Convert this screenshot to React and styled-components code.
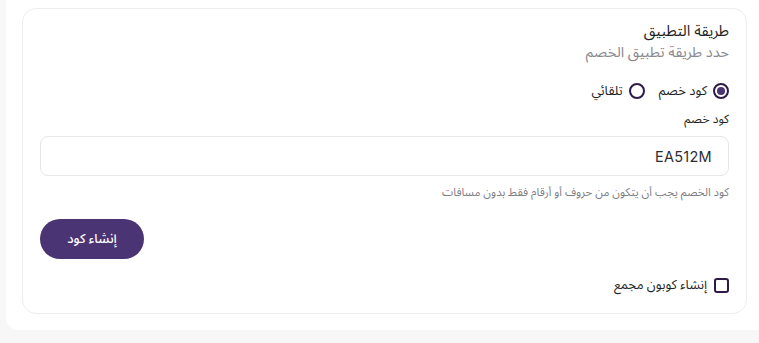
import React, { useState } from "react";
import styled, { createGlobalStyle } from "styled-components";

const GlobalStyle = createGlobalStyle`
  html, body {
    margin: 0;
    padding: 0;
    background: #f7f7f8;
  }
  body {
    font-family: "Noto Sans Arabic", "Noto Sans", "DejaVu Sans", sans-serif;
    overflow: hidden;
  }
`;

const Page = styled.div`
  width: 759px;
  height: 343px;
  padding: 0 0 13px 6px;
  box-sizing: border-box;
  display: flex;
  flex-direction: column;
`;

const OuterCard = styled.div`
  flex: 1;
  background: #ffffff;
  border-radius: 0 0 0 12px;
  padding: 8px 12px 16px 16px;
  display: flex;
  flex-direction: column;
`;

const Panel = styled.section`
  flex: 1;
  direction: rtl;
  background: #fff;
  border: 1px solid #ededee;
  border-radius: 14px;
  padding: 12px 17px 15px 17px;
  display: flex;
  flex-direction: column;
  align-items: stretch;
`;

const Title = styled.h3`
  margin: 0;
  font-size: 15px;
  line-height: 20px;
  font-weight: 400;
  color: #1f1f24;
`;

const Subtitle = styled.p`
  margin: 1px 0 0;
  font-size: 14.5px;
  line-height: 22px;
  font-weight: 400;
  color: #8a8a90;
`;

const RadioRow = styled.div`
  margin-top: 17px;
  display: flex;
  align-items: center;
  gap: 14px;
  height: 20px;
`;

const Option = styled.label`
  display: flex;
  align-items: center;
  gap: 6px;
  font-size: 13px;
  color: #1f1f24;
  cursor: pointer;
`;

const RadioCircle = styled.span`
  width: 16px;
  height: 16px;
  box-sizing: border-box;
  border: 2px solid #2c1a47;
  border-radius: 50%;
  display: flex;
  align-items: center;
  justify-content: center;

  &::after {
    content: "";
    width: 8px;
    height: 8px;
    border-radius: 50%;
    background: ${(p) => (p.$checked ? "#4b3474" : "transparent")};
  }
`;

const FieldLabel = styled.div`
  margin-top: 10px;
  font-size: 12px;
  line-height: 18px;
  color: #1f1f24;
`;

const Input = styled.input`
  margin-top: 7px;
  height: 40px;
  box-sizing: border-box;
  border: 1px solid #e6e6e8;
  border-radius: 8px;
  padding: 0 16px;
  font-family: "Inter", "Roboto", sans-serif;
  font-size: 14.5px;
  color: #2e2e33;
  letter-spacing: 0.02em;
  direction: rtl;
  outline: none;
  background: #fff;
`;

const Helper = styled.div`
  margin-top: 7px;
  font-size: 11.3px;
  line-height: 18px;
  color: #7d7d84;
`;

const ButtonRow = styled.div`
  margin-top: 18px;
  display: flex;
  justify-content: flex-end;
`;

const CreateButton = styled.button`
  width: 104px;
  height: 40px;
  border: none;
  border-radius: 20px;
  background: #4b3474;
  color: #fff;
  font-family: inherit;
  font-size: 13px;
  font-weight: 500;
  cursor: pointer;
`;

const CheckRow = styled.label`
  margin-top: 16px;
  display: flex;
  align-items: center;
  gap: 7px;
  height: 20px;
  font-size: 13px;
  color: #1f1f24;
  cursor: pointer;
`;

const CheckBox = styled.span`
  width: 15px;
  height: 15px;
  box-sizing: border-box;
  border: 2px solid #2c1a47;
  border-radius: 3px;
  background: ${(p) => (p.$checked ? "#4b3474" : "#fff")};
`;

const App = () => {
  const [mode, setMode] = useState("code");
  const [code, setCode] = useState("EA512M");
  const [bulk, setBulk] = useState(false);

  return (
    <>
      <GlobalStyle />
      <Page>
        <OuterCard>
          <Panel>
            <Title>طريقة التطبيق</Title>
            <Subtitle>حدد طريقة تطبيق الخصم</Subtitle>
            <RadioRow>
              <Option onClick={() => setMode("code")}>
                <RadioCircle $checked={mode === "code"} />
                كود خصم
              </Option>
              <Option onClick={() => setMode("auto")}>
                <RadioCircle $checked={mode === "auto"} />
                تلقائي
              </Option>
            </RadioRow>
            <FieldLabel>كود خصم</FieldLabel>
            <Input value={code} onChange={(e) => setCode(e.target.value)} />
            <Helper>كود الخصم يجب أن يتكون من حروف أو أرقام فقط بدون مسافات</Helper>
            <ButtonRow>
              <CreateButton>إنشاء كود</CreateButton>
            </ButtonRow>
            <CheckRow onClick={() => setBulk(!bulk)}>
              <CheckBox $checked={bulk} />
              إنشاء كوبون مجمع
            </CheckRow>
          </Panel>
        </OuterCard>
      </Page>
    </>
  );
};

export default App;
